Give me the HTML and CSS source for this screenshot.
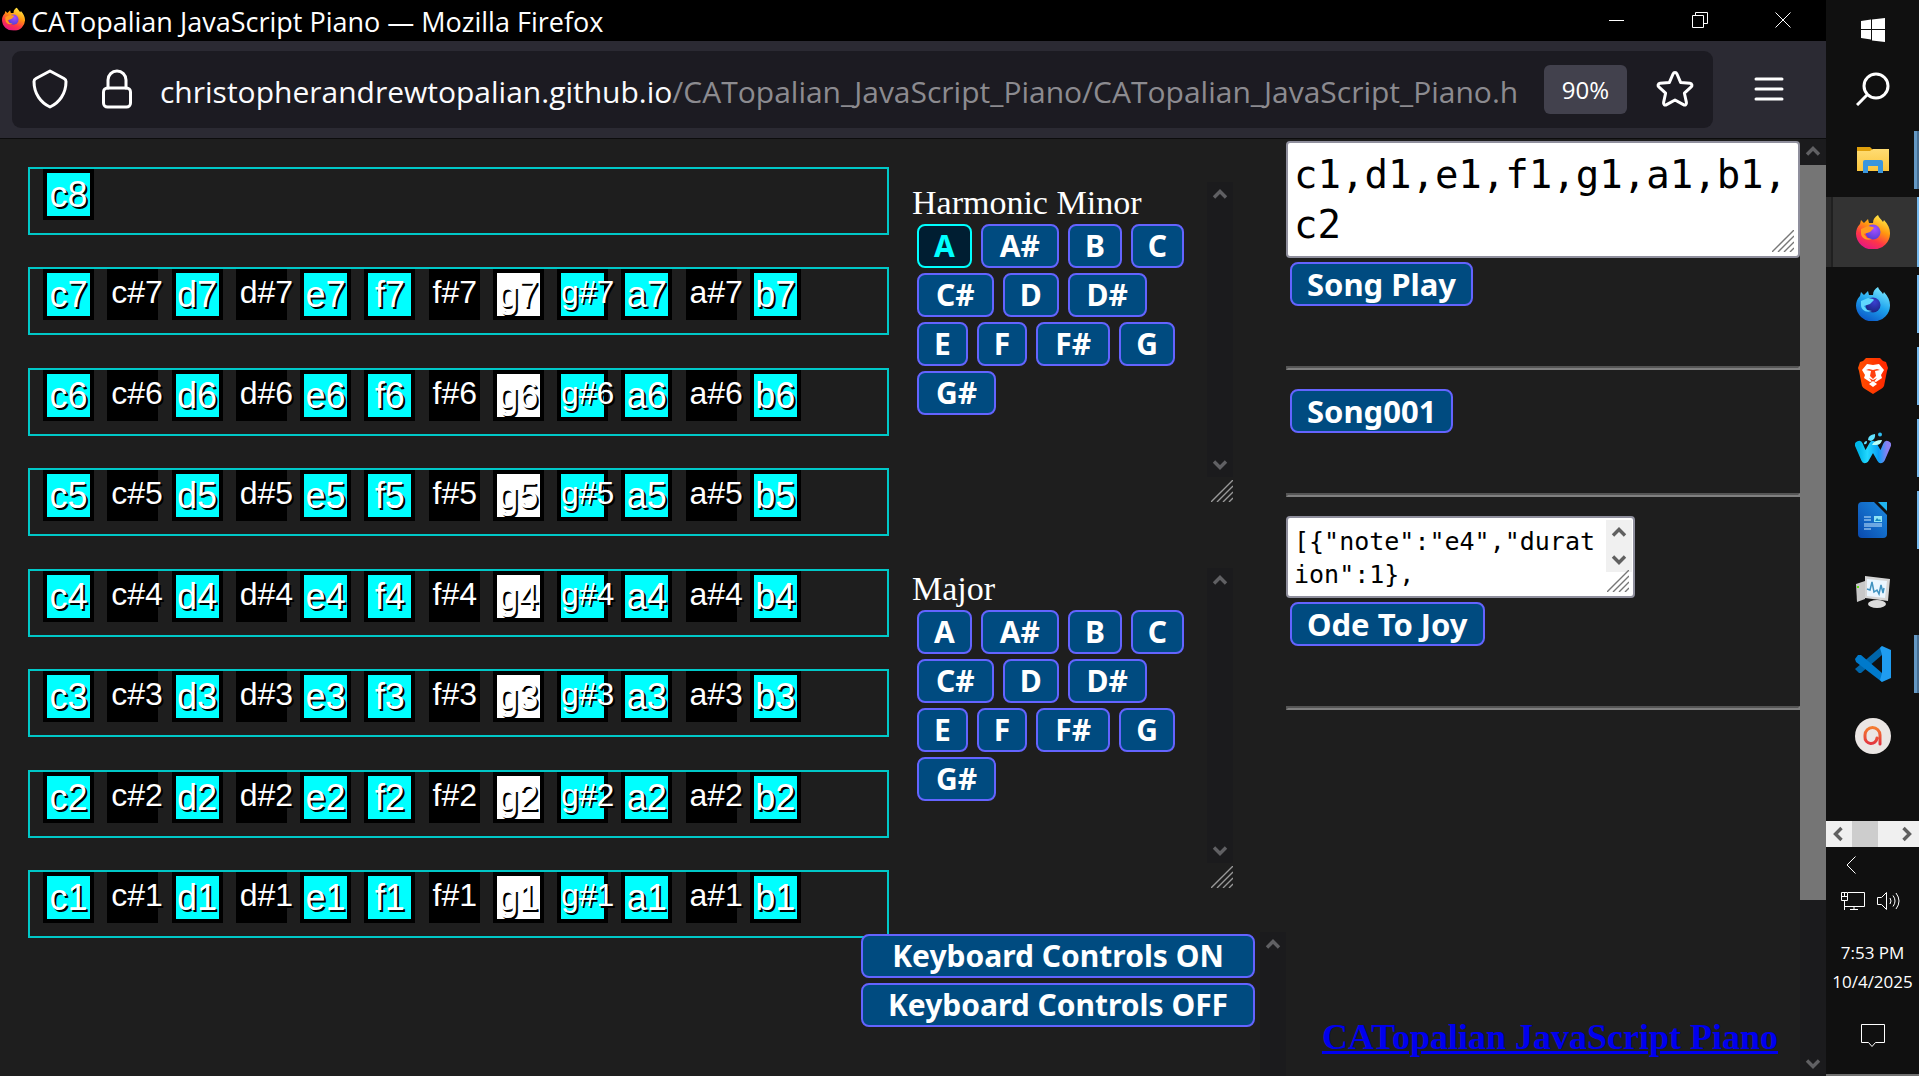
FILE: index.html
```html
<!DOCTYPE html>
<html lang="en">
<head>
<meta charset="utf-8">
<title>CATopalian JavaScript Piano</title>
<link rel="stylesheet" href="styles.css">
</head>
<body>
<svg class="defs" aria-hidden="true">
  <defs>
    <linearGradient id="fire" x1="0.8" y1="0" x2="0.3" y2="1"><stop offset="0" stop-color="#fff44f"/><stop offset="0.4" stop-color="#ff980e"/><stop offset="0.7" stop-color="#ff3647"/><stop offset="1" stop-color="#e31587"/></linearGradient>
    <radialGradient id="globe" cx="0.6" cy="0.3" r="0.8"><stop offset="0" stop-color="#a84fff"/><stop offset="1" stop-color="#4b3bd0"/></radialGradient>
    <linearGradient id="ice" x1="0.8" y1="0" x2="0.3" y2="1"><stop offset="0" stop-color="#80ebff"/><stop offset="0.5" stop-color="#1fa5ee"/><stop offset="1" stop-color="#0a57c8"/></linearGradient>
    <radialGradient id="deep" cx="0.6" cy="0.3" r="0.8"><stop offset="0" stop-color="#3a3fd0"/><stop offset="1" stop-color="#14237a"/></radialGradient>
    <linearGradient id="brave" x1="0" x2="1"><stop offset="0" stop-color="#ff5000"/><stop offset="1" stop-color="#ff2500"/></linearGradient>
    <linearGradient id="wave" x1="0" x2="1"><stop offset="0" stop-color="#00b6e8"/><stop offset="0.3" stop-color="#22d8ff"/><stop offset="0.7" stop-color="#0aa0f5"/><stop offset="1" stop-color="#8a80f0"/></linearGradient>
    <linearGradient id="doc" x1="1" y1="0" x2="0" y2="1"><stop offset="0" stop-color="#1b8be0"/><stop offset="1" stop-color="#0a49ae"/></linearGradient>
    <linearGradient id="folder" x1="0" y1="0" x2="0" y2="1"><stop offset="0" stop-color="#ffdc73"/><stop offset="1" stop-color="#fbc63d"/></linearGradient>
    <linearGradient id="ring" x1="0" y1="0" x2="0" y2="1"><stop offset="0" stop-color="#f47b30"/><stop offset="1" stop-color="#e3353f"/></linearGradient>
    <symbol id="up" viewBox="0 0 26 26"><path d="M7 15.500l6-6 6 6" fill="none" stroke="currentColor" stroke-width="3.400"/></symbol>
    <symbol id="down" viewBox="0 0 26 26"><path d="M7 10.500l6 6 6-6" fill="none" stroke="currentColor" stroke-width="3.400"/></symbol>
    <symbol id="grip" viewBox="0 0 22 22"><path d="M0 22L22 0M6 22L22 6M12 22L22 12M18 22l4-4" fill="none" stroke="currentColor" stroke-width="1.400"/></symbol>
    <symbol id="fox" viewBox="0 0 34 34"><path d="M4 9l1-4 3 3 4-4 1 4h4c0-4 2-6 5-8 1 3 3 4 5 7l1-2c4 4 6 9 6 13a17 16 0 0 1-34 1C0 15 1 12 4 9z"/></symbol>
    <symbol id="foxface" viewBox="0 0 34 34"><path d="M5 14l7-3 5 1 1 1-4 4-6 2 3 4 5 1c-6 2-11-1-11-6z"/></symbol>
  </defs>
</svg>
<div class="screen">
  <div class="browser">
    <header class="titlebar">
      <svg class="favicon" viewBox="0 0 34 34"><use href="#fox" fill="url(#fire)"/><circle cx="17" cy="18" r="7.500" fill="url(#globe)"/><use href="#foxface" fill="#ff9a1f"/></svg>
      <span class="window-title">CATopalian JavaScript Piano — Mozilla Firefox</span>
      <div class="window-buttons">
        <button aria-label="Minimize"><svg viewBox="0 0 16 16"><path d="M0 8.500h15"/></svg></button>
        <button aria-label="Restore"><svg viewBox="0 0 16 16"><path d="M.5 3.500h11v12H.5zM3.500 3.500V.5h12v11h-4"/></svg></button>
        <button aria-label="Close"><svg viewBox="0 0 16 16"><path d="M.5.5l15 15M15.500.5l-15 15"/></svg></button>
      </div>
    </header>
    <nav class="toolbar">
      <div class="urlbar">
        <svg class="shield" viewBox="0 0 36 40"><path d="M18 2l14 7.500c1.500.8 2 1.500 2 3C34 25 27 34 18 38 9 34 2 25 2 12.500c0-1.500.5-2.200 2-3z"/></svg>
        <svg class="lock" viewBox="0 0 30 40"><rect x="1.500" y="19" width="27" height="19" rx="4"/><path d="M6 19v-8a9 9 0 0 1 18 0v8"/></svg>
        <a class="url" href="#piano"><b>christopherandrewtopalian.github.io</b>/CATopalian_JavaScript_Piano/CATopalian_JavaScript_Piano.h</a>
        <button class="zoom">90%</button>
        <button class="star" aria-label="Bookmark"><svg viewBox="0 0 38 38"><path d="M19 2.500c1 0 1.600.6 2 1.500l3.600 8.400 9.300.9c2.100.3 2.700 2.100 1.300 3.600l-6.800 6.300 2 9.200c.4 2.200-1.200 3.300-3 2.200L19 30l-8.400 4.600c-1.800 1.100-3.400 0-3-2.200l2-9.200-6.800-6.300c-1.400-1.500-.8-3.300 1.300-3.600l9.300-.9L17 4c.4-.9 1-1.500 2-1.500z"/></svg></button>
      </div>
      <button class="menu" aria-label="Menu"><svg viewBox="0 0 28 24"><path d="M1 2h26M1 12h26M1 22h26"/></svg></button>
    </nav>
    <main class="page">
      <section class="piano" id="piano" aria-label="Piano"></section>
      <section class="tools">
        <div class="scale">
          <div class="scale-body">
            <h2>Harmonic Minor</h2>
            <div class="notes" data-active="A"></div>
          </div>
          <div class="side"><div class="bar"><svg><use href="#up"/></svg><svg><use href="#down"/></svg></div><svg class="grip"><use href="#grip"/></svg></div>
        </div>
        <div class="scale">
          <div class="scale-body">
            <h2>Major</h2>
            <div class="notes"></div>
          </div>
          <div class="side"><div class="bar"><svg><use href="#up"/></svg><svg><use href="#down"/></svg></div><svg class="grip"><use href="#grip"/></svg></div>
        </div>
        <div class="keyboard">
          <div class="keyboard-buttons">
            <button class="btn">Keyboard Controls ON</button>
            <button class="btn">Keyboard Controls OFF</button>
          </div>
          <div class="bar"><svg><use href="#up"/></svg></div>
        </div>
      </section>
      <section class="songs">
        <div class="field"><textarea class="song-notes" aria-label="Song notes" spellcheck="false">c1,d1,e1,f1,g1,a1,b1,c2</textarea><svg class="grip field-grip"><use href="#grip"/></svg></div>
        <button class="btn">Song Play</button>
        <hr>
        <button class="btn">Song001</button>
        <hr>
        <div class="field json-field"><textarea class="song-json" aria-label="Song data" spellcheck="false">[{"note":"e4","duration":1},</textarea>
          <div class="bar light"><svg><use href="#up"/></svg><svg><use href="#down"/></svg></div><svg class="grip field-grip"><use href="#grip"/></svg></div>
        <button class="btn">Ode To Joy</button>
        <hr>
        <a class="home" href="#piano">CATopalian JavaScript Piano</a>
      </section>
      <div class="bar page-bar"><svg><use href="#up"/></svg><div class="thumb"></div><svg><use href="#down"/></svg></div>
    </main>
  </div>
  <aside class="taskbar">
    <button class="start" aria-label="Start"><svg width="24" height="24" viewBox="0 0 24 24"><path fill="#fff" d="M0 3l10-1.500V11H0zM11 1.400L24 0v11H11zM0 12h10v9.500L0 20zM11 12h13v12l-13-1.500z"/></svg></button>
    <button class="start" aria-label="Search"><svg width="34" height="34" viewBox="0 0 34 34" fill="none" stroke="#fff" stroke-width="3"><circle cx="20" cy="14" r="12"/><path d="M11.500 22.500L1 33"/></svg></button>
    <button class="app wide" aria-label="File Explorer"><svg width="32" height="28" viewBox="0 0 32 28"><path fill="#e0a00c" d="M0 1h13l3 3-2 2H0z"/><path fill="url(#folder)" d="M0 5h13l3-2h16v22H0z"/><path fill="#3a96dd" d="M6 16q0-2 2-2h16q2 0 2 2v11h-5v-7H11v7H6z"/></svg></button>
    <button class="app active" aria-label="Firefox"><svg width="34" height="34"><use href="#fox" fill="url(#fire)"/><circle cx="17" cy="17" r="7.500" fill="url(#globe)"/><use href="#foxface" fill="#ff9a1f"/></svg></button>
    <button class="app open" aria-label="Firefox Developer"><svg width="34" height="34"><use href="#fox" fill="url(#ice)"/><circle cx="17" cy="18" r="7.500" fill="url(#deep)"/><use href="#foxface" fill="#5fd6ff"/></svg></button>
    <button class="app open" aria-label="Brave"><svg width="30" height="36" viewBox="0 0 30 36"><path fill="url(#brave)" d="M8 0h14l3 3 3 1 2 6-1 3-3 15q-1 2-3 3l-8 5-8-5q-2-1-3-3L1 13 0 10l2-6 3-1z"/><path fill="#fff" d="M9 6l6 1 6-1 5 6-3 5 1 3-6 4-3-1-3 1-6-4 1-3-3-5z"/><path fill="#ff4010" d="M8 12l5 1-1 5 3 3 3-3-1-5 5-1-3-1-4 1-4-1z M11 20l4 2 4-2-4 5z"/><path fill="#fff" d="M11 26l4-3 4 3-4 3z"/></svg></button>
    <button class="app open" aria-label="Waterfox"><svg width="36" height="32" viewBox="0 0 36 32"><path d="M4 13l6 14 8-14 8 14 6-14" fill="none" stroke="url(#wave)" stroke-width="8" stroke-linecap="round" stroke-linejoin="round"/><path d="M17 13q2-5 10-5-1 5-6 5z" fill="#b9fff8"/><circle cx="25" cy="2.500" r="2" fill="#30bdf0"/><path d="M13 8q0-5 7-6 1 5-4 7zM9 12q0-3 3-3 0 4-3 3z" fill="#62e2ff"/></svg></button>
    <button class="app open" aria-label="Writer"><svg width="30" height="36" viewBox="0 0 30 36"><path fill="url(#doc)" d="M4 0h12l13 13v19q0 4-4 4H4q-4 0-4-4V4q0-4 4-4z"/><path fill="#20b5f0" d="M20 0h9v9z"/><path d="M6 15h7M6 18h7M6 22h18M6 24h18M6 27h7" stroke="#c8e8ff" stroke-width="1"/><path fill="#8fe4f5" d="M16 14h8v6h-8z"/><path fill="#168ac0" d="M17 19l2-3 2 2 1-1 1 2z"/></svg></button>
    <button class="app" aria-label="Performance Monitor"><svg width="34" height="32" viewBox="0 0 34 32"><path fill="#c8c8c8" d="M0 8l9-3v18l-8 3z"/><path fill="#5fe010" d="M1 10h2v2H1z"/><path fill="#d5d5d5" d="M9 0l25 3-2 22-23-3z"/><path fill="#eaf6ff" d="M11 3l20 2-2 17-18-2z"/><path d="M11 13l3 1 2-8 2 10 3-2 2 4 2-9 2 8 1-5" fill="none" stroke="#3f92c0" stroke-width="1.500"/><ellipse cx="21" cy="28" rx="9" ry="4" fill="#dcdcdc"/></svg></button>
    <button class="app wide" aria-label="Visual Studio Code"><svg width="36" height="36" viewBox="0 0 36 36"><path fill="#0065a9" d="M0 23l4 4 2 0L27 9V0z"/><path fill="#007acc" d="M0 13l3-4 3 0 21 18v9L1 16z"/><path fill="#1f9cf0" d="M27 0l9 4v28l-9 4-2-2 2-7V9l-2-7z"/></svg></button>
    <button class="app" aria-label="Audio app"><svg width="36" height="36" viewBox="0 0 36 36"><circle cx="18" cy="18" r="18" fill="#ebe6e4"/><path d="M25 26V17a7.500 7.500 0 0 0-15 0v2a6 6 0 0 0 12 1" fill="none" stroke="url(#ring)" stroke-width="3" stroke-linecap="round"/></svg></button>
    <div class="hbar"><svg class="turn"><use href="#up"/></svg><span></span><svg class="turn"><use href="#down"/></svg></div>
    <div class="tray">
      <button class="expand" aria-label="Show hidden icons"><svg width="10" height="18" viewBox="0 0 10 18"><path d="M9.500.5L1 9l8.500 8.500"/></svg></button>
      <div class="status">
        <svg width="24" height="18" viewBox="0 0 24 18"><path d="M7 .5h16.500v14H3.500M.5.5h6v8h-6zM0 4.500h7M3.500 .5v4M3.500 8.500V18M13 14.500v3M9 17.500h8"/></svg>
        <svg width="24" height="18" viewBox="0 0 24 18"><path d="M.5 5.500h4l5-5v17l-5-5h-4zM13 6q2 3 0 6M16 3.500q4 5.500 0 11M19 1q6 8 0 16"/></svg>
      </div>
      <time>7:53 PM</time>
      <time>10/4/2025</time>
      <button class="notify" aria-label="Notifications"><svg width="24" height="24" viewBox="0 0 24 24"><path d="M.5.5h23v18h-9l-3.500 4-3.500-4h-7z"/></svg></button>
    </div>
  </aside>
</div>
<script src="piano.js"></script>
</body>
</html>
```
FILE: piano.js
```js
const names = ['c', 'c#', 'd', 'd#', 'e', 'f', 'f#', 'g', 'g#', 'a', 'a#', 'b'];
const piano = document.getElementById('piano');

for (let octave = 8; octave >= 1; octave--) {
  const row = document.createElement('div');
  row.className = 'octave';
  const keys = octave === 8 ? ['c'] : names;
  for (const name of keys) {
    const key = document.createElement('button');
    key.className = 'key';
    if (name.includes('#')) key.classList.add('sharp');
    if (name === 'g') key.classList.add('white');
    if (name === 'g#') key.classList.add('cyan');
    key.textContent = name + octave;
    row.append(key);
  }
  piano.append(row);
}

for (const group of document.querySelectorAll('.notes')) {
  for (const note of ['A', 'A#', 'B', 'C', 'C#', 'D', 'D#', 'E', 'F', 'F#', 'G', 'G#']) {
    const button = document.createElement('button');
    button.className = 'btn';
    if (note.includes('#')) button.classList.add('note-sharp');
    if (group.dataset.active === note) button.classList.add('on');
    button.textContent = note;
    group.append(button);
  }
}
```
FILE: styles.css
```css
* { box-sizing: border-box; }
body { margin: 0; background: #1e1e1e; color: #fff; font-family: "Open Sans", sans-serif; }
button { margin: 0; padding: 0; border: 0; background: none; color: inherit; font: inherit; }
svg { display: block; flex: none; }
.defs { position: absolute; width: 0; height: 0; }

.screen { display: grid; grid-template-columns: minmax(0, 1fr) 93px; min-height: 100vh; }
.browser { display: flex; flex-direction: column; }

.titlebar { display: flex; align-items: center; height: 41px; background: #000; }
.favicon { width: 23px; height: 24px; margin: 0 6px 4px 2px; }
.window-title { flex: 1; font-size: 27px; line-height: 36px; white-space: nowrap; padding-top: 2px; }
.window-buttons { display: flex; padding-right: 2px; }
.window-buttons button { display: grid; place-items: center; width: 83px; height: 40px; padding-bottom: 2px; }
.window-buttons svg { width: 16px; height: 16px; fill: none; stroke: #fff; }

.toolbar { display: flex; align-items: center; gap: 41px; height: 98px; padding: 0 42px 1px 12px; background: #2b2a33; border-bottom: 1px solid #0c0c0d; }
.urlbar { flex: 1; min-width: 0; display: flex; align-items: center; height: 77px; padding: 0 19px 0 20px; border-radius: 9px; background: #1c1b22; }
.urlbar svg, .menu svg { fill: none; stroke: #fff; stroke-width: 3; stroke-linejoin: round; stroke-linecap: round; }
.shield { width: 36px; height: 40px; margin-right: 34px; }
.lock { width: 30px; height: 40px; margin-right: 28px; }
.url { flex: 1; min-width: 0; overflow: hidden; white-space: nowrap; color: #8c8b90; font-size: 30px; line-height: 42px; text-decoration: none; padding-top: 6px; }
.url b { font-weight: 400; color: #fbfbfe; }
.zoom { width: 83px; height: 49px; margin: 0 29px 0 14px; border-radius: 6px; background: #42414d; font-size: 24px; }
.star svg { width: 38px; height: 38px; }
.menu svg { width: 30px; height: 24px; }

.page { flex: 1; display: grid; grid-template-columns: minmax(0, 911fr) minmax(0, 375fr) minmax(0, 514fr) 26px; }

.piano { display: flex; flex-direction: column; justify-content: space-between; height: 771px; margin: 28px 22px 0 28px; }
.octave { display: grid; grid-template-columns: repeat(12, minmax(0, 1fr)); height: 68px; padding: 0 73px 0 13px; border: 2px solid #00c8c8; }
.key { width: 51px; height: 51px; border: 4px solid #000; background: #0ff; color: #fff; font: 36px/43px "Liberation Sans", sans-serif; text-shadow: 2px 2px 0 #000; white-space: nowrap; }
.sharp { background: #000; font-size: 32px; line-height: 39px; padding-bottom: 4px; text-align: left; }
.white { background: #fff; }
.cyan { background: #0ff; }

.bar { display: flex; flex-direction: column; justify-content: space-between; width: 26px; background: #1b1b1d; color: #606063; }
.bar svg, .turn { width: 26px; height: 26px; }
.grip { width: 22px; height: 22px; color: #999; }

.tools { display: flex; flex-direction: column; padding-top: 43px; }
.scale { display: flex; height: 321px; margin: 0 53px 65px 1px; }
.scale-body { flex: 1; min-width: 0; }
.scale h2 { margin: 2px 0 3px; font: 34px/37px "Liberation Serif", serif; }
.notes { display: flex; flex-wrap: wrap; gap: 5px 9px; padding: 0 10px 0 5px; }
.btn { height: 44px; padding: 1px 15px; border: 2px solid #6464ff; border-radius: 8px; background: #004b80; color: #fff; font: bold 30px/38px "Noto Sans", sans-serif; white-space: nowrap; }
.note-sharp { padding: 1px 17px; }
.on { border-color: #0ff; background: #001e32; color: #0ff; }
.side { display: flex; flex-direction: column; align-items: flex-end; gap: 3px; }
.side .bar { height: 295px; }
.keyboard { flex: 1; display: flex; justify-content: space-between; margin: -22px 0 0 -50px; }
.keyboard-buttons { display: flex; flex-direction: column; gap: 5px; width: 394px; padding-top: 2px; }

.songs { display: flex; flex-direction: column; align-items: flex-start; padding-top: 2px; }
.field { position: relative; width: 100%; margin-bottom: 4px; }
.field textarea { display: block; width: 100%; border: 2px solid #8f8f9d; border-radius: 4px; background: #fff; color: #000; resize: none; overflow: hidden; word-break: break-all; font-family: "DejaVu Sans Mono", monospace; }
.song-notes { height: 117px; padding: 7px 4px 3px 6px; font-size: 39px; line-height: 50px; }
.field-grip { position: absolute; right: 6px; bottom: 6px; color: #777; }
.json-field { width: 349px; }
.song-json { height: 82px; padding: 7px 28px 3px 6px; font-size: 25px; line-height: 33px; }
.light { position: absolute; top: 4px; right: 3px; background: #f0f0f0; color: #606060; }
.songs .btn { margin-left: 4px; font-size: 31px; }
.songs hr { width: 100%; margin: 60px 0 19px; border: 2px solid; border-color: #555 #808080 #808080 #555; }
.home { margin: auto 22px 16px auto; color: #00e; font: bold 36px/46px "Liberation Serif", serif; white-space: nowrap; }
.page-bar { justify-content: flex-start; }
.page-bar .thumb { height: 735px; background: #757575; margin-bottom: auto; }

.taskbar { display: flex; flex-direction: column; background: #101010; border-bottom: 2px solid #707070; }
.start { display: grid; place-items: center; height: 59px; }
.start + .start { height: 65px; padding-bottom: 6px; }
.app { display: grid; place-items: center; height: 72px; background: linear-gradient(#76b9ed, #76b9ed) no-repeat right center / 0 58px; }
.app.open { background-size: 2px 58px; }
.app.wide { background: linear-gradient(90deg, #6498c4 60%, #466d90 60%) no-repeat right center / 5px 58px; }
.app.active { height: 70px; margin: 1px 0; background: linear-gradient(#76b9ed, #76b9ed) no-repeat right center / 2px 70px, linear-gradient(90deg, #2b2b2b 5px, #202020 5px, #202020 7px, #333 7px); }
.hbar { display: flex; height: 26px; margin-top: 49px; background: #f0f0f0; color: #606060; }
.hbar span { width: 26px; margin-right: 15px; background: #cdcdcd; }
.turn { transform: rotate(-90deg); }
.tray { flex: 1; display: flex; flex-direction: column; align-items: center; font-size: 17px; line-height: 29px; }
.tray svg { fill: none; stroke: #fff; }
.expand { align-self: flex-start; margin: 9px 0 18px 20px; }
.status { display: flex; gap: 12px; margin-bottom: 28px; padding-right: 4px; }
.notify { margin-top: 28px; }
```
